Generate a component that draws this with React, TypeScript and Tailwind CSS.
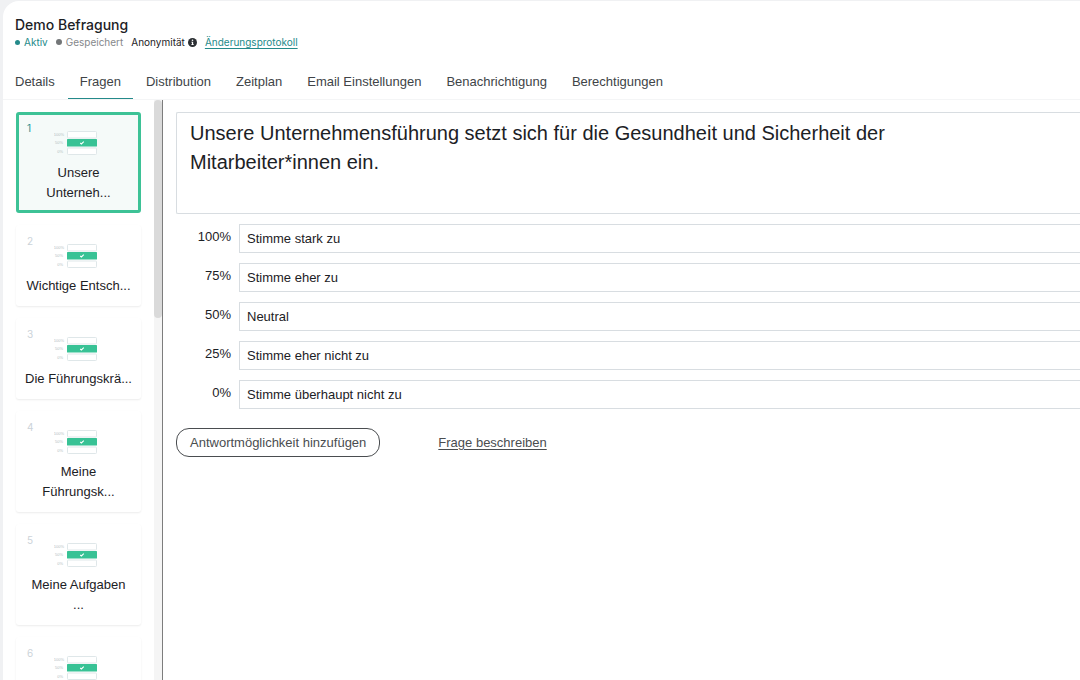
import { useState } from "react";
import clsx from "clsx";

const tabs = [
  "Details",
  "Fragen",
  "Distribution",
  "Zeitplan",
  "Email Einstellungen",
  "Benachrichtigung",
  "Berechtigungen",
];

const questions = [
  "Unsere Unterneh...",
  "Wichtige Entsch...",
  "Die Führungskrä...",
  "Meine Führungsk...",
  "Meine Aufgaben\n...",
  "Meine Arbeit ist...",
];

const initialAnswers = [
  { score: "100%", label: "Stimme stark zu" },
  { score: "75%", label: "Stimme eher zu" },
  { score: "50%", label: "Neutral" },
  { score: "25%", label: "Stimme eher nicht zu" },
  { score: "0%", label: "Stimme überhaupt nicht zu" },
];

/** Thumbnail of a scale question: three answer bars, the middle one picked */
function ScaleIcon() {
  return (
    <svg width="49" height="24" viewBox="0 0 49 24" aria-hidden="true">
      <g fontSize="4" textAnchor="end" fill="#b4bec3">
        <text x="10" y="5">100%</text>
        <text x="9" y="13">50%</text>
        <text x="9" y="22">0%</text>
      </g>
      <rect x="13.5" y="0.5" width="29" height="6.5" rx="0.8" fill="#fff" stroke="#dfe7e9" />
      <rect x="13.5" y="17" width="29" height="6.5" rx="0.8" fill="#fff" stroke="#dfe7e9" />
      <rect x="13" y="8" width="30" height="7.5" rx="0.6" fill="#38c295" />
      <path d="M26.2 12l1.2 1 2.4-2.4" fill="none" stroke="#fff" strokeWidth="1.1" />
    </svg>
  );
}

function InfoIcon() {
  return (
    <svg width="9" height="9" viewBox="0 0 18 18" aria-hidden="true">
      <circle cx="9" cy="9" r="9" fill="#2b2f33" />
      <circle cx="9" cy="4.6" r="1.6" fill="#fff" />
      <path d="M6.6 7.4h3.7v5h1.3v1.8H6.6v-1.8h1.3V9.2H6.6z" fill="#fff" />
    </svg>
  );
}

interface QuestionCardProps {
  index: number;
  title: string;
  active: boolean;
  onSelect: () => void;
}

function QuestionCard({ index, title, active, onSelect }: QuestionCardProps) {
  return (
    <button
      type="button"
      onClick={onSelect}
      className={clsx(
        "relative flex w-full shrink-0 flex-col items-center rounded-[3px] border-3 px-[5px] pt-4 pb-[7px] text-[13px] leading-5 text-[#1c2125]",
        active
          ? "border-[#3dc296] bg-[#f5faf9]"
          : "border-transparent bg-white shadow-[0_1px_2px_rgba(0,0,0,0.08)]"
      )}
    >
      <span
        className={clsx(
          "absolute top-[7px] left-2 font-['Inter','Liberation_Sans',sans-serif] text-[10px] leading-3",
          active ? "text-[#2a9090]" : "text-[#ccd3d9]"
        )}
      >
        {index}
      </span>
      <ScaleIcon />
      <span className="mt-2 whitespace-pre-line">{title}</span>
    </button>
  );
}

export default function App() {
  const [activeTab, setActiveTab] = useState("Fragen");
  const [activeQuestion, setActiveQuestion] = useState(0);
  const [question, setQuestion] = useState(
    "Unsere Unternehmensführung setzt sich für die Gesundheit und Sicherheit der Mitarbeiter*innen ein."
  );
  const [answers, setAnswers] = useState(initialAnswers);

  const updateAnswer = (index: number, label: string) => {
    setAnswers((prev) => prev.map((a, i) => (i === index ? { ...a, label } : a)));
  };

  return (
    <div className="flex h-screen flex-col overflow-hidden bg-[#f0f1f3] pt-px pl-[3px] font-['Liberation_Sans',Arial,sans-serif] text-[#1c2125]">
      <div className="flex min-h-0 flex-1 flex-col rounded-tl-2xl bg-white">
        <header className="px-3 pt-[14px] font-['Inter','Liberation_Sans',sans-serif]">
          <h1 className="text-sm leading-5 font-medium">Demo Befragung</h1>
          <div className="flex items-center text-[10px] leading-[14px]">
            <span className="flex items-center gap-1 text-[#248a8a]">
              <span className="size-[5px] rounded-full bg-[#248a8a]" />
              Aktiv
            </span>
            <span className="ml-2 flex items-center gap-1 text-[#85888b]">
              <span className="size-[6px] rounded-full bg-[#737678]" />
              Gespeichert
            </span>
            <span className="ml-2 flex items-center gap-[3px]">
              Anonymität
              <InfoIcon />
            </span>
            <a href="#" className="ml-2 text-[#248a8a] underline underline-offset-2">
              Änderungsprotokoll
            </a>
          </div>
        </header>

        <nav className="mt-4 flex gap-px border-b border-[#f4f5f6] text-[13px] leading-5">
          {tabs.map((tab) => (
            <button
              key={tab}
              type="button"
              onClick={() => setActiveTab(tab)}
              className={clsx(
                "border-b px-3 pt-[7px] pb-[6px] whitespace-nowrap text-[#404447]",
                tab === activeTab ? "border-[#248a8a]" : "border-transparent"
              )}
            >
              {tab}
            </button>
          ))}
        </nav>

        <div className="flex min-h-0 flex-1">
          <aside className="flex w-40 shrink-0 border-r border-[#7d7d7d]">
            <div className="flex flex-1 flex-col gap-3 overflow-hidden px-[13px] pt-3">
              {questions.map((title, i) => (
                <QuestionCard
                  key={title}
                  index={i + 1}
                  title={title}
                  active={i === activeQuestion}
                  onSelect={() => setActiveQuestion(i)}
                />
              ))}
            </div>
            {/* Scroll track */}
            <div className="w-2 bg-[#f5f5f5]">
              <div className="h-[218px] rounded-full bg-[#dadada]" />
            </div>
          </aside>

          <main className="min-w-0 flex-1 pt-3 pl-[13px]">
            <textarea
              aria-label="Frage"
              value={question}
              onChange={(e) => setQuestion(e.target.value)}
              className="block h-[102px] w-full resize-none rounded-l-[2px] border border-r-0 border-[#d8dde1] py-[6px] pr-36 pl-[13px] text-[20px] leading-[29px] outline-none"
            />

            <div className="mt-[10px] flex flex-col gap-[10px]">
              {answers.map((answer, i) => (
                <div key={answer.score} className="flex items-start gap-2">
                  <label
                    htmlFor={`answer-${i}`}
                    className="w-[55px] text-right text-[13px] leading-[26px]"
                  >
                    {answer.score}
                  </label>
                  <input
                    id={`answer-${i}`}
                    type="text"
                    value={answer.label}
                    onChange={(e) => updateAnswer(i, e.target.value)}
                    className="h-[29px] min-w-0 flex-1 border border-r-0 border-[#d8dde1] px-[7px] text-[13px] outline-none"
                  />
                </div>
              ))}
            </div>

            <div className="mt-[19px] flex items-center gap-[58px] text-[13px] text-[#4a4d50]">
              <button
                type="button"
                className="h-[29px] rounded-[13px] border border-[#4a4d50] px-[13px] whitespace-nowrap"
              >
                Antwortmöglichkeit hinzufügen
              </button>
              <a href="#" className="underline underline-offset-2">
                Frage beschreiben
              </a>
            </div>
          </main>
        </div>
      </div>
    </div>
  );
}
